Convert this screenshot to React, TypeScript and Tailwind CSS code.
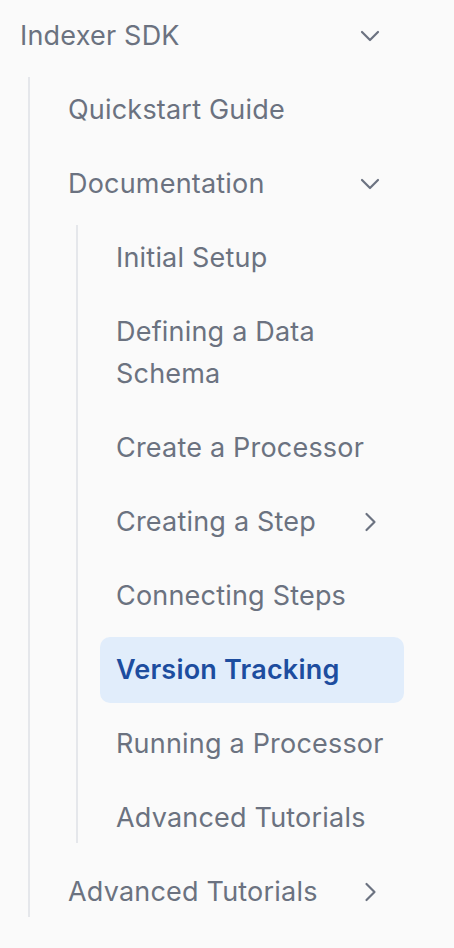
import React from 'react';

interface NavItem {
  title: string;
  active?: boolean;
  open?: boolean;
  collapsed?: boolean;
  children?: NavItem[];
}

const tree: NavItem = {
  title: 'Indexer SDK',
  open: true,
  children: [
    { title: 'Quickstart Guide' },
    {
      title: 'Documentation',
      open: true,
      children: [
        { title: 'Initial Setup' },
        { title: 'Defining a Data Schema' },
        { title: 'Create a Processor' },
        { title: 'Creating a Step', collapsed: true },
        { title: 'Connecting Steps' },
        { title: 'Version Tracking', active: true },
        { title: 'Running a Processor' },
        { title: 'Advanced Tutorials' },
      ],
    },
    { title: 'Advanced Tutorials', collapsed: true },
  ],
};

const Chevron = ({ open }: { open: boolean }) => (
  <svg viewBox="0 0 36 36" className="w-9 h-9 shrink-0 text-[#6b7280]" fill="none">
    <path
      d={open ? 'M10 14 L18 22 L26 14' : 'M14.5 10 L22.5 18 L14.5 26'}
      stroke="currentColor"
      strokeWidth="2.2"
      strokeLinecap="round"
      strokeLinejoin="round"
    />
  </svg>
);

const Row = ({ item }: { item: NavItem }) => {
  const hasChevron = item.open || item.collapsed;
  return (
    <div
      className={`flex items-center justify-between gap-2 rounded-[10px] pl-4 pr-4 py-3 text-[27px] leading-[42px] tracking-[0.2px] ${
        item.active ? 'bg-[#e1edfb] text-[#1d4d9f] font-semibold' : 'text-[#6b7280]'
      }`}
    >
      <span>{item.title}</span>
      {hasChevron && <Chevron open={!!item.open} />}
    </div>
  );
};

const Node = ({ item }: { item: NavItem }) => (
  <li className="flex flex-col">
    <Row item={item} />
    {item.open && item.children && (
      <ul className="relative ml-6 pl-6 pt-2 flex flex-col gap-2 before:absolute before:left-0 before:top-2 before:bottom-2 before:w-[2px] before:bg-[#e5e7eb]">
        {item.children.map((child, i) => (
          <Node key={i} item={child} />
        ))}
      </ul>
    )}
  </li>
);

export default function App() {
  return (
    <div
      className="min-h-screen bg-[#fafafa] pt-[3px] pl-1"
      style={{ fontFamily: 'Inter, "Noto Sans", sans-serif' }}
    >
      <ul className="flex flex-col w-[400px]">
        <Node item={tree} />
      </ul>
    </div>
  );
}
